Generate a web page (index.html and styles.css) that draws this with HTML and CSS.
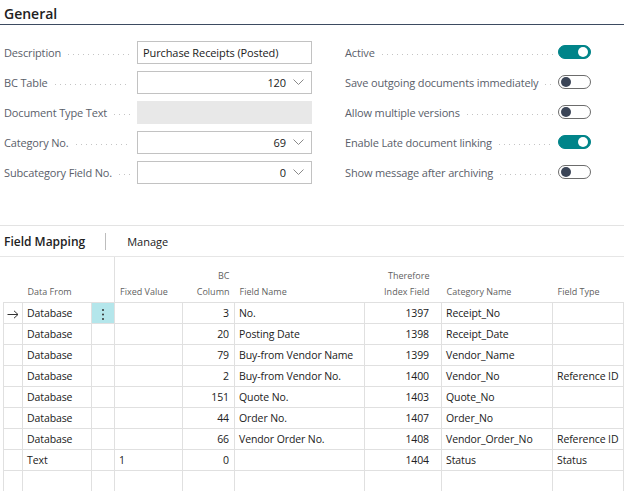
FILE: index.html
```html
<!DOCTYPE html>
<html lang="en">
<head>
<meta charset="utf-8">
<title>General</title>
<link rel="stylesheet" href="styles.css">
</head>
<body>
<div class="page">
  <section class="general">
    <h2 class="sec-title">General</h2>
    <div class="form">
      <div class="col col-left">
        <div class="row">
          <span class="label">Description</span><span class="leader"></span>
          <div class="input">Purchase Receipts (Posted)</div>
        </div>
        <div class="row">
          <span class="label">BC Table</span><span class="leader"></span>
          <div class="input select"><span class="val">120</span><svg class="chev" width="11" height="6" viewBox="0 0 11 6"><polyline points="0.5,0.5 5.5,5.5 10.5,0.5" fill="none" stroke="#8a8a8a" stroke-width="1"/></svg></div>
        </div>
        <div class="row">
          <span class="label">Document Type Text</span><span class="leader"></span>
          <div class="input disabled"></div>
        </div>
        <div class="row">
          <span class="label">Category No.</span><span class="leader"></span>
          <div class="input select"><span class="val">69</span><svg class="chev" width="11" height="6" viewBox="0 0 11 6"><polyline points="0.5,0.5 5.5,5.5 10.5,0.5" fill="none" stroke="#8a8a8a" stroke-width="1"/></svg></div>
        </div>
        <div class="row">
          <span class="label">Subcategory Field No.</span><span class="leader"></span>
          <div class="input select"><span class="val">0</span><svg class="chev" width="11" height="6" viewBox="0 0 11 6"><polyline points="0.5,0.5 5.5,5.5 10.5,0.5" fill="none" stroke="#8a8a8a" stroke-width="1"/></svg></div>
        </div>
      </div>
      <div class="col col-right">
        <div class="row">
          <span class="label">Active</span><span class="leader"></span>
          <span class="toggle on"><span class="knob"></span></span>
        </div>
        <div class="row">
          <span class="label">Save outgoing documents immediately</span><span class="leader"></span>
          <span class="toggle"><span class="knob"></span></span>
        </div>
        <div class="row">
          <span class="label">Allow multiple versions</span><span class="leader"></span>
          <span class="toggle"><span class="knob"></span></span>
        </div>
        <div class="row">
          <span class="label">Enable Late document linking</span><span class="leader"></span>
          <span class="toggle on"><span class="knob"></span></span>
        </div>
        <div class="row">
          <span class="label">Show message after archiving</span><span class="leader"></span>
          <span class="toggle"><span class="knob"></span></span>
        </div>
      </div>
    </div>
  </section>

  <section class="mapping">
    <div class="mapping-bar">
      <span class="mapping-title">Field Mapping</span>
      <span class="bar-sep"></span>
      <span class="bar-action">Manage</span>
    </div>
    <table class="grid">
      <colgroup>
        <col class="c-arrow"><col class="c-from"><col class="c-act"><col class="c-fixed"><col class="c-bc"><col class="c-name"><col class="c-idx"><col class="c-cat"><col class="c-type">
      </colgroup>
      <thead>
        <tr>
          <th class="h-arrow"></th>
          <th class="h-left">Data From</th>
          <th class="h-act"></th>
          <th class="h-left">Fixed Value</th>
          <th class="h-right">BC<br>Column</th>
          <th class="h-left">Field Name</th>
          <th class="h-right h-idx">Therefore<br>Index Field</th>
          <th class="h-left">Category Name</th>
          <th class="h-left">Field Type</th>
        </tr>
      </thead>
      <tbody>
        <tr>
          <td class="arrow"><svg width="12" height="9" viewBox="0 0 12 9"><path d="M0.5 4.5 H11 M7 0.8 L11 4.5 L7 8.2" fill="none" stroke="#333" stroke-width="1"/></svg></td>
          <td>Database</td>
          <td class="act current"><svg width="4" height="13" viewBox="0 0 4 13"><circle cx="2" cy="2" r="1" fill="#333"/><circle cx="2" cy="6.5" r="1" fill="#333"/><circle cx="2" cy="11" r="1" fill="#333"/></svg></td>
          <td></td><td class="num">3</td><td>No.</td><td class="num idx">1397</td><td>Receipt_No</td><td></td>
        </tr>
        <tr><td class="arrow"></td><td>Database</td><td class="act"></td><td></td><td class="num">20</td><td>Posting Date</td><td class="num idx">1398</td><td>Receipt_Date</td><td></td></tr>
        <tr><td class="arrow"></td><td>Database</td><td class="act"></td><td></td><td class="num">79</td><td>Buy-from Vendor Name</td><td class="num idx">1399</td><td>Vendor_Name</td><td></td></tr>
        <tr><td class="arrow"></td><td>Database</td><td class="act"></td><td></td><td class="num">2</td><td>Buy-from Vendor No.</td><td class="num idx">1400</td><td>Vendor_No</td><td>Reference ID</td></tr>
        <tr><td class="arrow"></td><td>Database</td><td class="act"></td><td></td><td class="num">151</td><td>Quote No.</td><td class="num idx">1403</td><td>Quote_No</td><td></td></tr>
        <tr><td class="arrow"></td><td>Database</td><td class="act"></td><td></td><td class="num">44</td><td>Order No.</td><td class="num idx">1407</td><td>Order_No</td><td></td></tr>
        <tr><td class="arrow"></td><td>Database</td><td class="act"></td><td></td><td class="num">66</td><td>Vendor Order No.</td><td class="num idx">1408</td><td>Vendor_Order_No</td><td>Reference ID</td></tr>
        <tr><td class="arrow"></td><td>Text</td><td class="act"></td><td>1</td><td class="num">0</td><td></td><td class="num idx">1404</td><td>Status</td><td>Status</td></tr>
        <tr><td class="arrow"></td><td></td><td class="act"></td><td></td><td class="num"></td><td></td><td class="num idx"></td><td></td><td></td></tr>
      </tbody>
    </table>
  </section>
</div>
</body>
</html>
```

FILE: styles.css
```css
html, body {
  margin: 0;
  padding: 0;
  background: #ffffff;
}

body {
  font-family: "Open Sans", Lato, sans-serif;
  color: #212121;
  width: 624px;
  height: 491px;
  overflow: hidden;
}

.sec-title {
  margin: 0;
  padding: 4px 4px 0 4px;
  height: 20px;
  font-size: 14px;
  line-height: 20px;
  font-weight: 600;
  color: #212121;
  border-bottom: 1px solid #3d4b61;
}

.form {
  display: flex;
  gap: 33px;
  padding: 12px 33px 0 4px;
}

.col-left {
  width: 308px;
  flex: none;
}

.col-right {
  flex: 1;
}

.row {
  display: flex;
  align-items: center;
  height: 30px;
}

.label {
  flex: none;
  font-size: 11px;
  letter-spacing: -0.15px;
  color: #5a606a;
  white-space: nowrap;
}

.leader {
  flex: 1;
  height: 1px;
  margin: 4px 7px 0 7px;
  background-image: linear-gradient(to right, #c4c4c4 1px, transparent 1px);
  background-size: 5px 1px;
  background-repeat: repeat-x;
}

.col-right .leader {
  margin-right: 5px;
}

.input {
  flex: none;
  box-sizing: border-box;
  width: 175px;
  height: 23px;
  border: 1px solid #c2c2c2;
  font-size: 11px;
  letter-spacing: -0.1px;
  line-height: 21px;
  padding: 0 5px;
  color: #212121;
  display: flex;
  align-items: center;
}

.input.select {
  justify-content: flex-end;
  gap: 7px;
  padding-right: 7px;
}

.input.disabled {
  background: #e8e8e8;
  border-color: #e8e8e8;
}

.chev {
  display: block;
  flex: none;
}

.toggle {
  flex: none;
  box-sizing: border-box;
  width: 33px;
  height: 14px;
  border-radius: 7px;
  border: 1px solid #6c6c6c;
  background: #ffffff;
  position: relative;
}

.toggle .knob {
  position: absolute;
  top: 1px;
  left: 2px;
  width: 10px;
  height: 10px;
  border-radius: 50%;
  background: #3b4557;
}

.toggle.on {
  background: #008489;
  border-color: #008489;
}

.toggle.on .knob {
  left: auto;
  right: 2px;
  background: #ffffff;
}

.mapping {
  margin-top: 38px;
  border-top: 1px solid #e3e3e3;
}

.mapping-bar {
  display: flex;
  align-items: center;
  height: 30px;
  padding-left: 4px;
  border-bottom: 1px solid #e6e6e6;
}

.mapping-title {
  font-size: 12px;
  font-weight: 600;
  color: #212121;
}

.bar-sep {
  width: 1px;
  height: 17px;
  background: #bdbdbd;
  margin: 0 21px 0 20px;
}

.bar-action {
  font-size: 11px;
  color: #212121;
}

.grid {
  margin-left: 3px;
  width: 620px;
  table-layout: fixed;
  border-collapse: collapse;
  font-size: 10.5px;
  letter-spacing: -0.1px;
}

.c-arrow { width: 19px; }
.c-from { width: 69px; }
.c-act { width: 23px; }
.c-fixed { width: 68px; }
.c-bc { width: 52px; }
.c-name { width: 130px; }
.c-idx { width: 77px; }
.c-cat { width: 111px; }
.c-type { width: 71px; }

.grid th {
  height: 43px;
  padding: 0 5px 2px 5px;
  vertical-align: bottom;
  font-size: 9px;
  letter-spacing: 0;
  line-height: 16px;
  font-weight: 400;
  color: #5f5f5f;
  white-space: nowrap;
  border-bottom: 1px solid #e0e0e0;
}

.grid th.h-left { text-align: left; }
.grid th.h-right { text-align: right; }
.grid th.h-idx { padding-right: 12px; }
.grid th.h-act { border-right: 1px solid #e0e0e0; }

.grid td {
  height: 20px;
  padding: 0 4px 0 4px;
  border: 1px solid #e0e0e0;
  line-height: 20px;
  white-space: nowrap;
  overflow: hidden;
  color: #212121;
}

.grid td.num { text-align: right; padding-right: 5px; }
.grid td.idx { padding-right: 12px; }

.grid td.arrow {
  padding: 0;
  text-align: center;
}

.grid td.arrow svg,
.grid td.act svg {
  display: inline-block;
  vertical-align: middle;
}

.grid td.act {
  padding: 0;
  text-align: center;
}

.grid td.act.current {
  background: #b4e6eb;
}
```
